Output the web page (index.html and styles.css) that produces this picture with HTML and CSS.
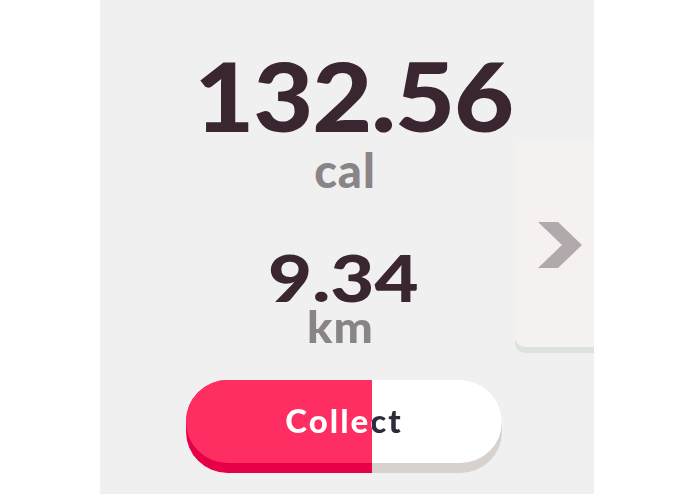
FILE: index.html
```html
<!DOCTYPE html>
<html lang="en">
<head>
<meta charset="utf-8">
<title>Activity</title>
<link rel="stylesheet" href="styles.css">
</head>
<body>
<main class="panel">
  <section class="stats">
    <div class="stat-value big">132.56</div>
    <div class="stat-unit cal">cal</div>
    <div class="stat-value mid">9.34</div>
    <div class="stat-unit km">km</div>
  </section>
  <button class="btn" type="button">
    <span class="btn-face"><span class="btn-label">Collect</span></span>
  </button>
  <aside class="peek-card">
    <svg class="chevron" width="44" height="46" viewBox="0 0 44 46" aria-hidden="true">
      <polygon points="0,0 20,0 44,23 20,46 0,46 24,23" fill="#b2a9ad"/>
    </svg>
  </aside>
</main>
</body>
</html>
```

FILE: styles.css
```css
html, body {
  margin: 0;
  padding: 0;
  background: #ffffff;
}

body {
  font-family: "Lato", "Open Sans", sans-serif;
  width: 695px;
  height: 494px;
  overflow: hidden;
}

.panel {
  position: relative;
  margin-left: 100px;
  width: 494px;
  height: 494px;
  background: #f0f0f0;
  overflow: hidden;
  display: flex;
  flex-direction: column;
  align-items: center;
  padding-top: 57px;
  box-sizing: border-box;
}

.stats {
  display: flex;
  flex-direction: column;
  align-items: center;
}

.stat-value {
  font-weight: 900;
  color: #3a2631;
  line-height: 0.8;
}

.big {
  font-size: 96px;
  letter-spacing: -1px;
  margin-left: 14px;
  transform: scaleX(1.08);
}

.mid {
  font-size: 65px;
  letter-spacing: 0;
  margin-top: 62px;
  margin-left: -8px;
  transform: scaleX(1.17);
}

.stat-unit {
  font-weight: 900;
  color: #8a8487;
}

.cal {
  font-size: 47px;
  letter-spacing: 1px;
  line-height: 0.8;
  margin-top: 18px;
  margin-left: -4px;
}

.km {
  font-size: 44px;
  letter-spacing: 1px;
  line-height: 0.7;
  margin-top: 8px;
  margin-left: -13px;
  transform: scaleX(1.06);
}

.btn {
  margin-top: 38px;
  margin-left: -6px;
  width: 316px;
  height: 93px;
  padding: 0 0 10px 0;
  border: none;
  border-radius: 41.5px;
  background: linear-gradient(90deg, #e6004a 58.9%, #d7d2ce 58.9%);
  font: inherit;
  cursor: pointer;
  box-sizing: border-box;
}

.btn-face {
  display: flex;
  align-items: center;
  justify-content: center;
  height: 83px;
  border-radius: 41.5px;
  background: linear-gradient(90deg, #ff2e62 58.9%, #ffffff 58.9%);
}

.btn-label {
  width: 100%;
  text-align: center;
  font-size: 33px;
  font-weight: 900;
  letter-spacing: 2px;
  line-height: 1;
  padding-bottom: 2px;
  color: transparent;
  background: linear-gradient(90deg, #ffffff 58.9%, #2d2a39 58.9%);
  -webkit-background-clip: text;
  background-clip: text;
}

.peek-card {
  position: absolute;
  left: 415px;
  top: 139px;
  width: 100px;
  height: 208px;
  background: #f5f1ee;
  border-radius: 10px;
  box-shadow: 0 6px 0 #dce3df;
  display: flex;
  align-items: center;
  padding-left: 23px;
  box-sizing: border-box;
}

.chevron {
  display: block;
  margin-top: 3px;
}
```
